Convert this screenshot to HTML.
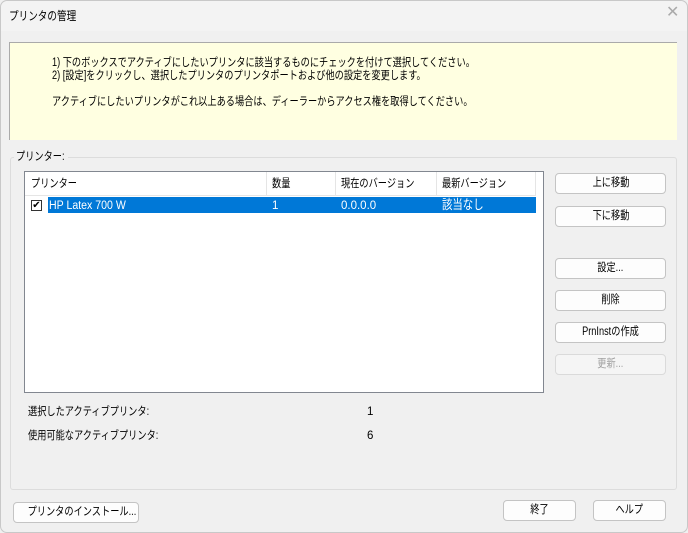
<!DOCTYPE html>
<html><head><meta charset="utf-8"><style>
*{box-sizing:border-box;margin:0;padding:0}
body{width:688px;height:533px;background:#f0f0f0;font-family:"Liberation Sans","Noto Sans CJK JP",sans-serif;font-size:11.5px;line-height:14px;color:#000;position:relative;overflow:hidden}
.a{position:absolute;white-space:nowrap}
.s{transform:scaleX(0.8);transform-origin:0 0}
.win{position:absolute;left:0;top:0;width:688px;height:533px;border:1px solid #c8c8c8;border-radius:7px;background:#f0f0f0}
.title{left:1px;top:1px;width:686px;height:30px;background:#f3f3f3;border-radius:7px 7px 0 0}
.btn{position:absolute;background:#fdfdfd;border:1px solid #c4c4c4;border-radius:4px;text-align:center;line-height:19px;height:21px;white-space:nowrap;overflow:visible}
.btn span{display:inline-block;transform:scaleX(0.8)}
.dis{background:#f5f5f5;color:#a0a0a0;border-color:#dadada}
</style></head><body>
<div class="win"></div>
<div class="a title"></div>
<div class="a s" style="left:9px;top:9px;font-size:12px">プリンタの管理</div>
<div class="a" style="left:666px;top:6px;font-size:16px;color:#aaa">✕</div>
<div class="a" style="left:9px;top:42px;width:668px;height:98px;background:#ffffe1;border-top:1px solid #aaa;border-left:1px solid #aaa"></div>
<div class="a s" style="left:52px;top:56px">1) 下のボックスでアクティブにしたいプリンタに該当するものにチェックを付けて選択してください。</div>
<div class="a s" style="left:52px;top:69px">2) [設定]をクリックし、選択したプリンタのプリンタポートおよび他の設定を変更します。</div>
<div class="a s" style="left:52px;top:95px">アクティブにしたいプリンタがこれ以上ある場合は、ディーラーからアクセス権を取得してください。</div>
<div class="a" style="left:10px;top:157px;width:667px;height:333px;border:1px solid #dcdcdc;border-radius:3px"></div>
<div class="a" style="left:14px;top:150px;background:#f0f0f0;padding:0 2px;width:54px;height:14px"></div>
<div class="a s" style="left:16px;top:150px">プリンター:</div>
<div class="a" style="left:24px;top:171px;width:520px;height:222px;background:#fff;border:1px solid #828790"></div>
<div class="a" style="left:25px;top:172px;width:510px;height:24px;background:#fff;border-bottom:1px solid #e5e5e5"></div>
<div class="a" style="left:266px;top:172px;width:1px;height:24px;background:#e5e5e5"></div>
<div class="a" style="left:335px;top:172px;width:1px;height:24px;background:#e5e5e5"></div>
<div class="a" style="left:436px;top:172px;width:1px;height:24px;background:#e5e5e5"></div>
<div class="a" style="left:535px;top:172px;width:1px;height:24px;background:#e5e5e5"></div>
<div class="a s" style="left:31px;top:177px">プリンター</div>
<div class="a s" style="left:272px;top:177px">数量</div>
<div class="a s" style="left:341px;top:177px">現在のバージョン</div>
<div class="a s" style="left:442px;top:177px">最新バージョン</div>
<div class="a" style="left:48px;top:197px;width:488px;height:16px;background:#0078d7"></div>
<div class="a" style="left:31px;top:200px;width:11px;height:11px;border:1px solid #333;background:#fff;font-size:10px;line-height:9px;text-align:center">✔</div>
<div class="a" style="left:49px;top:199px;color:#fff;transform:scaleX(0.92);transform-origin:0 0">HP Latex 700 W</div>
<div class="a" style="left:272px;top:199px;color:#fff">1</div>
<div class="a" style="left:341px;top:199px;color:#fff">0.0.0.0</div>
<div class="a s" style="left:442px;top:198px;color:#fff;font-size:13px">該当なし</div>
<div class="btn" style="left:555px;top:173px;width:111px"><span>上に移動</span></div>
<div class="btn" style="left:555px;top:206px;width:111px"><span>下に移動</span></div>
<div class="btn" style="left:555px;top:258px;width:111px"><span>設定...</span></div>
<div class="btn" style="left:555px;top:290px;width:111px"><span>削除</span></div>
<div class="btn" style="left:555px;top:322px;width:111px"><span>PrnInstの作成</span></div>
<div class="btn dis" style="left:555px;top:354px;width:111px"><span>更新...</span></div>
<div class="a s" style="left:28px;top:405px">選択したアクティブプリンタ:</div>
<div class="a" style="left:367px;top:405px">1</div>
<div class="a s" style="left:28px;top:429px">使用可能なアクティブプリンタ:</div>
<div class="a" style="left:367px;top:429px">6</div>
<div class="btn" style="left:13px;top:502px;width:126px"><span>プリンタのインストール...</span></div>
<div class="btn" style="left:503px;top:500px;width:73px"><span>終了</span></div>
<div class="btn" style="left:593px;top:500px;width:73px"><span>ヘルプ</span></div>
</body></html>
